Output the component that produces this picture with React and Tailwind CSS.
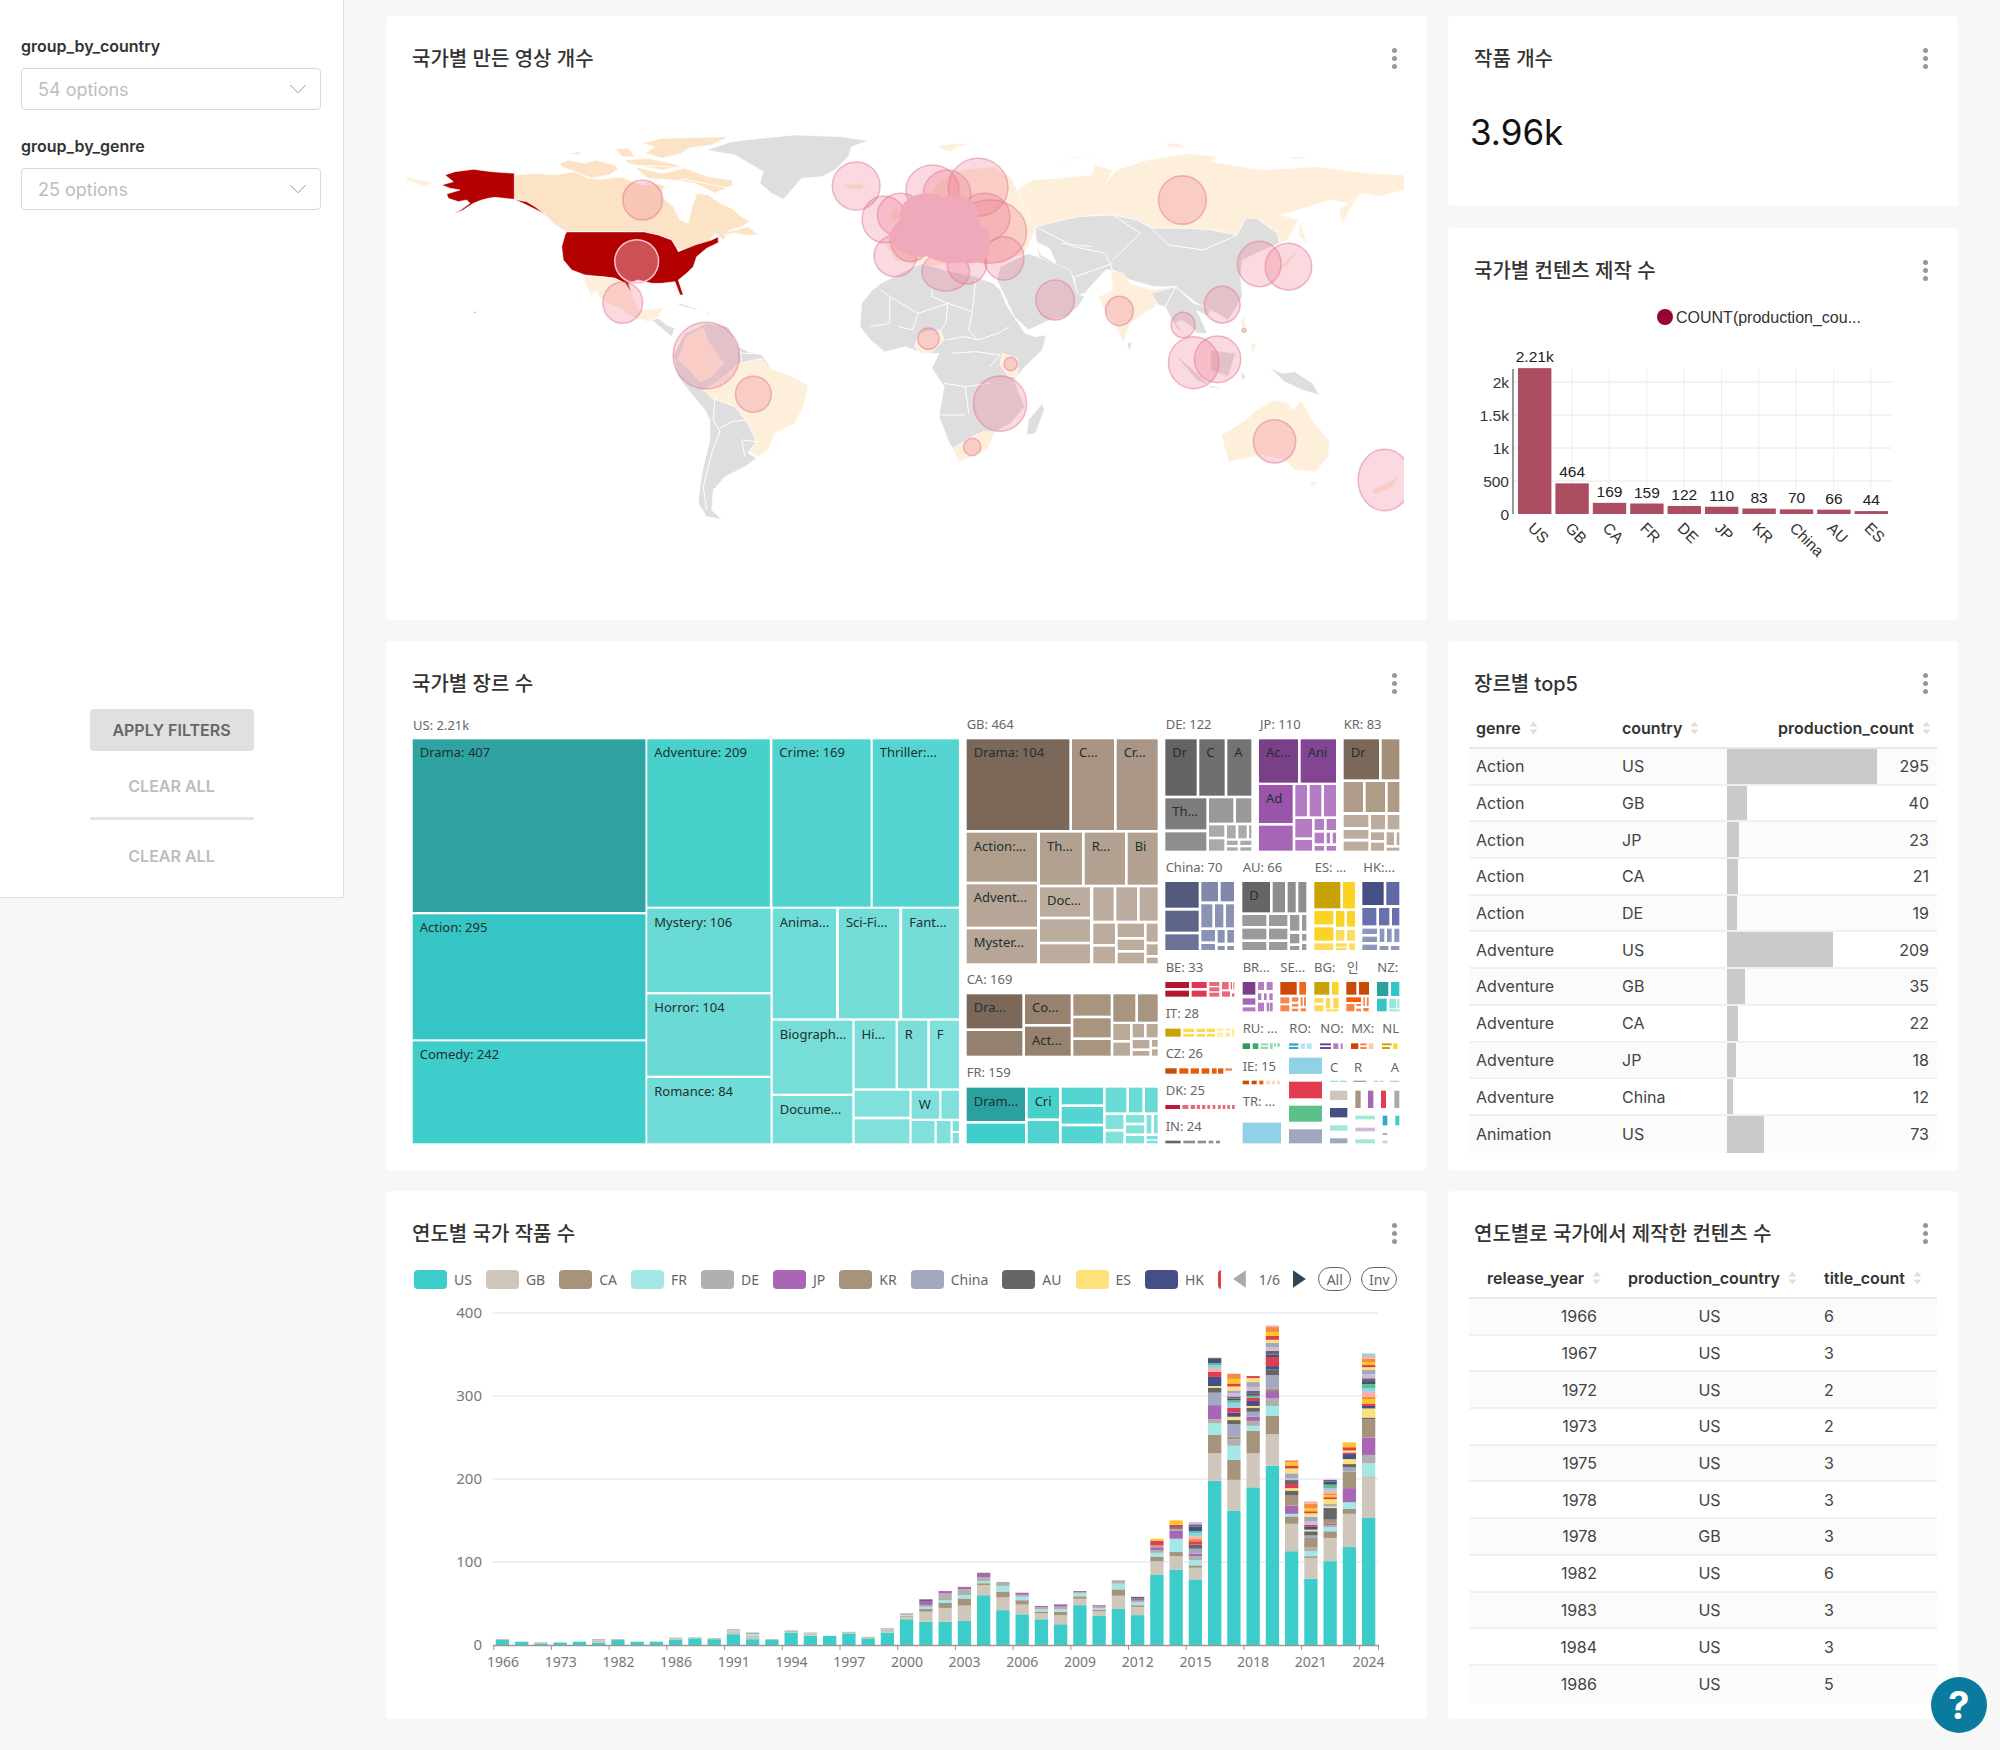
import { ChevronDown } from 'lucide-react'

const FONT = "font-['Inter','Noto_Sans_CJK_KR',sans-serif]"
const CHART_FONT = "font-['Noto_Sans','Noto_Sans_CJK_KR',sans-serif]"
const BAR_FONT = "font-['Liberation_Sans',sans-serif]"

const Kebab = () => (
  <div className="flex flex-col gap-[3px]">
    <span className="w-[5px] h-[5px] rounded-full bg-[#8e9aa0]"></span>
    <span className="w-[5px] h-[5px] rounded-full bg-[#8e9aa0]"></span>
    <span className="w-[5px] h-[5px] rounded-full bg-[#8e9aa0]"></span>
  </div>
)

const CardHeader = ({ title }) => (
  <div className="flex items-center justify-between pt-[29px] pl-[26px] pr-[30px] h-[55px]">
    <h2 className="text-[20px] leading-[26px] pt-[2px] font-medium text-[#333]">{title}</h2>
    <Kebab />
  </div>
)

const SortIcon = () => (
  <svg width="9" height="14" viewBox="0 0 9 14" className="inline-block ml-[8px] shrink-0">
    <path d="M4.5 0.5 L8.5 5.5 L0.5 5.5 Z" fill="#dfdfdf" />
    <path d="M4.5 13.5 L8.5 8.5 L0.5 8.5 Z" fill="#dfdfdf" />
  </svg>
)

// ---------- sidebar ----------
const FilterSelect = ({ label, value, className }) => (
  <div className={className}>
    <div className="text-[16px] leading-[20px] font-semibold text-[#333]">{label}</div>
    <div className="mt-[12px] h-[42px] w-[300px] border border-[#d9d9d9] rounded-[4px] flex items-center justify-between pl-[16px] pr-[7px]">
      <span className="text-[18px] text-[#bdbdbd]">{value}</span>
      <ChevronDown size={30} strokeWidth={0.8} className="text-[#999]" />
    </div>
  </div>
)

const Sidebar = () => (
  <aside className="w-[344px] h-[898px] bg-white border-r border-b border-[#e0e0e0] flex flex-col px-[21px] pt-[36px] shrink-0">
    <FilterSelect label="group_by_country" value="54 options" />
    <FilterSelect label="group_by_genre" value="25 options" className="mt-[26px]" />
    <div className="mt-auto mb-[23px] w-[164px] mx-auto flex flex-col items-center">
      <button className="w-full h-[42px] rounded-[4px] bg-[#e0e0e0] text-[16px] font-semibold text-[#666]">APPLY FILTERS</button>
      <div className="h-[36px] mt-[17px] flex items-center text-[16px] font-semibold text-[#bdbdbd]">CLEAR ALL</div>
      <div className="w-full h-[3px] mt-[13px] rounded-full bg-[#e4e4e4]"></div>
      <div className="h-[36px] mt-[18px] flex items-center text-[16px] font-semibold text-[#bdbdbd]">CLEAR ALL</div>
    </div>
  </aside>
)

// ---------- world map ----------
const GREY = '#dedede'
const PEACH = '#fce3c6'
const LIGHT = '#feefdb'
const RED = '#b30000'

// western half: x = 5 + zx / 3, y = 20 + zy / 3
const landWest = [
  [LIGHT, '35,170 75,180 110,185 95,200 60,190 35,180'],
  [PEACH, '740,70 800,55 1000,50 950,75 880,85 860,100 800,115 750,100 780,80'],
  [PEACH, '495,130 520,120 570,130 600,120 660,135 670,150 640,165 590,175 540,155 500,140'],
  [PEACH, '520,100 560,95 550,105'],
  [PEACH, '660,85 700,85 720,110 680,110'],
  [PEACH, '690,120 760,115 830,130 860,140 800,150 750,140 700,130'],
  [PEACH, '720,140 800,160 870,145 940,170 1010,180 1015,195 960,220 900,190 830,180 760,175 740,160'],
  [PEACH, '358,165 420,160 480,165 540,155 580,175 620,178 680,170 700,180 740,195 760,185 800,195 830,210 850,240 880,235 900,220 940,225 975,250 1010,265 1040,290 1065,305 1040,320 1005,330 985,360 960,340 940,365 900,380 860,390 845,385 830,360 790,345 745,335 515,335 480,315 455,290 420,265 395,245 358,238'],
  ['#ffffff', '805,205 850,200 905,225 890,265 880,310 855,300 835,260 800,230'],
  [PEACH, '985,345 1020,340 1050,345 1090,345 1060,320 1000,335'],
  [GREY, '935,90 1010,65 1100,55 1200,45 1340,50 1420,62 1370,80 1360,110 1320,150 1280,170 1220,175 1190,210 1165,238 1130,220 1095,190 1105,155 1080,140 1020,105'],
  [RED, '150,165 180,155 235,148 290,155 358,160 358,238 300,232 280,235 260,240 235,250 205,270 175,283 200,268 225,250 215,240 190,245 160,235 155,222 195,210 165,205 140,195 175,185'],
  [RED, '358,238 395,245 420,260 450,282 425,270 395,255'],
  [RED, '515,335 745,335 790,345 830,360 845,385 850,395 900,375 950,360 970,350 970,368 935,385 905,410 895,440 875,460 850,480 865,525 855,525 840,485 800,490 770,490 730,480 700,490 710,520 690,490 660,475 620,470 570,465 530,450 505,420 500,380 510,345'],
  [RED, '237,575 241,575 241,579 237,579'],
  [LIGHT, '565,470 620,470 660,475 690,490 710,520 730,570 790,565 805,565 790,590 760,605 720,595 680,570 620,540 600,510 590,530 570,490'],
  [GREY, '770,600 790,595 815,615 840,625 830,650 800,625'],
  [GREY, '855,550 900,565 910,572 850,555'],
  [GREY, '930,575 955,585 935,582'],
  [GREY, '870,640 935,610 1000,620 1030,680 1060,695 1100,705 1125,740 1030,770 960,830 1020,860 1060,910 1085,965 1060,1000 1085,1015 1050,1040 990,1070 955,1110 950,1170 980,1198 935,1190 910,1150 915,1100 925,1040 945,960 945,900 930,870 880,810 850,770 835,705'],
  [LIGHT, '875,650 925,625 935,660 985,730 950,770 915,785 885,750 850,720'],
  [LIGHT, '1030,730 1100,715 1125,745 1180,765 1240,795 1225,860 1200,910 1140,940 1120,990 1090,1010 1060,995 1085,965 1055,905 1020,860 950,835 925,810 960,790 1000,760'],
  [LIGHT, '1340,195 1400,190 1410,205 1370,208'],
]

const bordersWest = [
  '960,830 955,900 975,935 950,1000 925,1100 935,1170',
  '975,925 1010,905 1055,900',
  '1040,700 1100,700',
  '1035,690 1040,725',
  '1085,965 1040,960 1050,1010',
  '515,335 745,335',
  '740,195 870,178 1005,205',
  '660,152 720,136 860,142',
  '640,166 720,178',
  '820,118 900,130',
  '950,75 860,102',
]

// eastern half: x = 470 + zx / 2.851, y = 20 + zy / 3
const landEast = [
  [LIGHT, '220,78 260,72 330,70 280,80 260,95 240,90'],
  [LIGHT, '550,145 610,110 670,100 610,115 570,135'],
  [LIGHT, '870,70 910,70 930,85 880,80'],
  [LIGHT, '1225,110 1270,110 1265,116 1230,116'],
  [LIGHT, '420,170 450,210 490,180 560,175 660,165 670,135 720,150 700,190 730,150 820,120 940,100 1020,110 1000,125 1150,150 1300,140 1450,160 1555,165 1550,210 1480,230 1430,220 1400,260 1370,310 1390,250 1340,240 1250,270 1200,285 1250,300 1220,360 1195,370 1190,340 1130,295 1100,295 1075,345 1000,330 940,325 830,325 790,300 720,285 620,290 500,325 480,345 470,390 400,430'],
  [LIGHT, '100,420 70,370 140,340 110,290 170,270 220,190 290,150 380,140 430,170 500,330 470,400 400,430 300,420 200,440'],
  [LIGHT, '90,270 105,260 115,300 85,300'],
  [LIGHT, '1255,300 1265,340 1275,375 1250,345'],
  [LIGHT, '1250,390 1215,440 1190,450 1230,405'],
  [LIGHT, '1365,270 1425,220 1395,270 1375,310'],
  [GREY, '500,320 620,290 720,285 790,300 830,325 940,325 1000,330 1075,345 1100,295 1130,295 1190,340 1195,370 1130,400 1090,420 1085,470 1090,530 1050,600 1000,570 960,550 900,500 840,500 770,480 720,450 700,450 640,520 620,525 610,470 540,430 510,410 500,340'],
  ['#ffffff', '500,365 540,385 560,430 515,405'],
  [GREY, '400,440 480,400 600,450 620,520 640,530 620,560 590,590 540,600 480,630 440,590 400,500 390,480'],
  [LIGHT, '680,530 720,510 715,450 750,460 770,490 830,510 895,500 880,530 860,525 840,560 770,610 750,670 730,620 700,580'],
  [GREY, '765,665 775,670 770,690 762,680'],
  [GREY, '830,520 900,500 950,550 985,560 1000,570 990,590 960,570 990,640 960,640 945,620 915,600 900,610 930,650 900,620 870,560 850,555'],
  [LIGHT, '1085,600 1095,590 1100,620 1090,625'],
  [LIGHT, '1115,670 1130,670 1125,695 1115,690'],
  [GREY, '895,700 960,760 1000,800 960,780'],
  [GREY, '1000,690 1070,700 1050,770 1000,750'],
  [GREY, '990,795 1040,805 1000,803'],
  [GREY, '1085,750 1100,770 1090,780'],
  [GREY, '1170,745 1205,760 1240,755 1290,790 1310,825 1260,810 1210,785'],
  [GREY, '60,490 115,460 175,430 240,450 330,470 380,490 400,510 420,560 470,640 500,650 530,645 520,690 470,740 440,780 450,810 470,860 430,910 385,935 360,980 310,1010 280,1010 255,970 225,890 240,800 205,745 225,700 180,700 130,680 70,695 30,660 0,620 5,550 35,510'],
  [LIGHT, '265,985 295,965 320,950 350,935 385,935 365,985 310,1015 280,1025'],
  [LIGHT, '155,680 170,640 230,630 240,660 200,700 175,700'],
  [LIGHT, '405,700 450,715 450,770 425,770 400,735'],
  [GREY, '480,900 520,850 525,870 500,940 475,945'],
  [LIGHT, '1030,945 1100,900 1130,870 1180,840 1220,850 1235,870 1258,840 1290,900 1340,965 1335,1010 1300,1055 1240,1050 1210,1020 1150,1005 1050,1025'],
  [LIGHT, '1280,1085 1305,1085 1290,1100'],
  [LIGHT, '1460,1110 1520,1080 1540,1050 1520,1100 1470,1125'],
]

const bordersEast = [
  '60,510 85,530 165,580 250,550 320,575 330,480',
  '205,500 205,530 250,550',
  '85,530 85,610 30,620',
  '165,580 150,630 110,620',
  '250,550 245,610 230,630',
  '320,575 310,630 335,660 395,640 425,620',
  '245,660 300,650 335,660',
  '260,700 330,695 400,705',
  '240,790 300,800 310,880',
  '225,885 300,885',
  '370,740 400,705',
  '300,800 370,790',
  '500,320 610,380 700,400 720,450',
  '575,370 660,380',
  '615,470 720,430',
  '830,325 880,375 980,390 1075,345',
  '720,285 800,340 720,420',
  '870,560 900,500',
]

// bubbles: in a stretched space, x = zx * 0.6631, y = zy / 3
const bubbles = [
  [703, 258, 36, 72], [745, 358, 33, 70], [770, 345, 35, 65], [818, 270, 40, 75], [840, 285, 36, 75], [887, 262, 45, 87],
  [762, 468, 32, 62], [785, 420, 30, 65], [897, 352, 38, 72], [905, 395, 55, 95],
  [926, 475, 30, 65], [838, 515, 36, 58], [870, 490, 30, 62],
  [381, 300, 30, 60], [351, 608, 30, 62], [1195, 300, 36, 73], [1003, 600, 29, 60], [1100, 633, 21, 44],
  [1311, 492, 33, 68], [1355, 500, 35, 70], [1255, 614, 27, 55], [1196, 675, 18, 38], [1288, 691, 3, 6], [1212, 788, 38, 78], [1248, 778, 35, 70],
  [812, 716, 16, 32], [936, 792, 10, 20], [920, 911, 40, 83], [878, 1041, 13, 26],
  [477, 767, 50, 100], [548, 883, 27, 54], [1334, 1024, 32, 65], [1500, 1140, 40, 92],
]

// overlap of the many European bubbles reads as one solid pink patch
const clusterBlobs = [
  [810, 345, 42, 65], [850, 345, 38, 60], [800, 410, 46, 60], [850, 420, 55, 70], [830, 375, 60, 55], [875, 450, 30, 40],
]

const LandLayer = ({ polys, lines }) => (
  <>
    {polys.map(([fill, pts], i) => (
      <polygon key={i} points={pts} fill={fill} stroke="#fff" strokeWidth="0.6" vectorEffect="non-scaling-stroke" />
    ))}
    {lines.map((pts, i) => (
      <polyline key={i} points={pts} fill="none" stroke="#fff" strokeWidth="1" vectorEffect="non-scaling-stroke" />
    ))}
  </>
)

const WorldMap = () => (
  <svg width="1040" height="460" viewBox="0 0 1040 460" className="block ml-[4px] mt-[29px]">
    <defs>
      <clipPath id="map-clip"><rect x="0" y="0" width="1014" height="460" /></clipPath>
    </defs>
    <g clipPath="url(#map-clip)">
      <g transform="translate(470 20) scale(0.3508 0.3333)">
        <LandLayer polys={landEast} lines={bordersEast} />
      </g>
      <g transform="translate(5 20) scale(0.3333)">
        <LandLayer polys={landWest} lines={bordersWest} />
      </g>
      <g transform="scale(0.6631 0.3333)">
        {bubbles.map(([cx, cy, rx, ry], i) => (
          <ellipse key={i} cx={cx} cy={cy} rx={rx} ry={ry} fill="rgba(236,120,145,0.28)" stroke="rgba(226,120,145,0.5)" strokeWidth="1.5" vectorEffect="non-scaling-stroke" />
        ))}
        <ellipse cx="372" cy="484" rx="33" ry="65" fill="rgba(240,190,200,0.42)" stroke="#f2c2cb" strokeWidth="1.5" vectorEffect="non-scaling-stroke" />
        {clusterBlobs.map(([cx, cy, rx, ry], i) => (
          <ellipse key={i} cx={cx} cy={cy} rx={rx} ry={ry} fill="#f0a9bb" />
        ))}
      </g>
    </g>
  </svg>
)

// ---------- bar chart ----------
const barData = [
  ['US', 2210, '2.21k'], ['GB', 464, '464'], ['CA', 169, '169'], ['FR', 159, '159'], ['DE', 122, '122'],
  ['JP', 110, '110'], ['KR', 83, '83'], ['China', 70, '70'], ['AU', 66, '66'], ['ES', 44, '44'],
]

const BarChart = () => (
  <svg width="510" height="300" viewBox="1448 283 510 300" className={`block ${BAR_FONT}`}>
    <circle cx="1665" cy="317" r="8" fill="#96052e" />
    <text x="1676" y="323" className="text-[16px] fill-[#333]">COUNT(production_cou...</text>
    {[382, 415, 448, 481].map((y) => (
      <line key={y} x1="1513" x2="1892" y1={y} y2={y} stroke="#e8e8e8" />
    ))}
    {barData.map((_, i) => (
      <line key={i} x1={1534.5 + 37.4 * i} x2={1534.5 + 37.4 * i} y1="369" y2="514" stroke="#eeeeee" />
    ))}
    <line x1="1513" x2="1513" y1="369" y2="514" stroke="#333" />
    {[['2k', 388], ['1.5k', 421], ['1k', 454], ['500', 487], ['0', 520]].map(([t, y]) => (
      <text key={t} x="1509" y={y} textAnchor="end" className="text-[15.5px] fill-[#333]">{t}</text>
    ))}
    {barData.map(([name, value, label], i) => {
      const h = (value / 2000) * 132
      const x = 1518 + 37.4 * i
      return (
        <g key={name}>
          <rect x={x} y={514 - h} width="33.4" height={h} fill="#ad4d62" />
          <text x={x + 16.7} y={514 - h - 6} textAnchor="middle" className="text-[15.5px] fill-[#222]">{label}</text>
          <text x={1527 + 37.4 * i} y="529" transform={`rotate(45 ${1527 + 37.4 * i} 529)`} className="text-[15.5px] fill-[#333]">{name}</text>
        </g>
      )
    })}
  </svg>
)

// ---------- treemap ----------
// left block coordinates: x = 400 + zx / 2.75, y = 700 + zy / 3
const usCells = [
  ['#2fa3a1', '35,118,675,636', 'Drama: 407'],
  ['#35c5c4', '35,643,675,1018', 'Action: 295'],
  ['#3fcdcc', '35,1024,675,1330', 'Comedy: 242'],
  ['#48d0ca', '680,118,1017,620', 'Adventure: 209'],
  ['#50d3cf', '1024,118,1294,620', 'Crime: 169'],
  ['#54d5d1', '1300,118,1537,620', 'Thriller:...'],
  ['#69dad4', '680,626,1019,876', 'Mystery: 106'],
  ['#6bd9d4', '680,883,1019,1127', 'Horror: 104'],
  ['#70dcd7', '680,1134,1019,1330', 'Romance: 84'],
  ['#70dcd7', '1025,626,1199,955', 'Anima...'],
  ['#74dcd6', '1207,626,1373,955', 'Sci-Fi...'],
  ['#76dcd8', '1381,626,1537,955', 'Fant...'],
  ['#76ddd8', '1025,962,1244,1181', 'Biograph...'],
  ['#7bded9', '1250,962,1363,1165', 'Hi...'],
  ['#7dded9', '1369,962,1450,1165', 'R'],
  ['#80e0db', '1457,962,1537,1165', 'F'],
  ['#76ddd8', '1025,1188,1244,1330', 'Docume...'],
  ['#82e0dc', '1407,1172,1483,1256', 'W'],
  ['#82e0dc', '1250,1172,1401,1250 1489,1172,1537,1256 1250,1258,1401,1330 1407,1263,1470,1330 1476,1263,1514,1330 1520,1263,1537,1293 1520,1299,1537,1330'],
]

// right block coordinates: x = 950 + zx / 3, y = 700 + zy / 3
const restCells = [
  // GB
  ['#7c6859', '50,118,358,390', 'Drama: 104'],
  ['#a99383', '366,118,492,390', 'C...'],
  ['#aa9686', '500,118,623,390', 'Cr...'],
  ['#b09e8d', '50,398,261,545', 'Action:...'],
  ['#b2a090', '270,398,396,554', 'Th...'],
  ['#b2a090', '404,398,525,554', 'R...'],
  ['#b2a090', '533,398,623,554', 'Bi'],
  ['#b7a697', '50,553,261,680', 'Advent...'],
  ['#b7a697', '50,688,261,790', 'Myster...'],
  ['#bcac9e', '270,562,420,650', 'Doc...'],
  ['#bcac9e', '430,562,491,662 499,562,561,662 569,562,623,662 270,658,420,725 430,671,495,732 503,671,582,711 590,671,623,725 270,733,420,790 430,740,495,790 503,719,582,750 503,758,582,790 590,733,623,765 590,773,623,790'],
  // CA
  ['#7c6859', '50,883,217,985', 'Dra...'],
  ['#94806f', '50,993,217,1067'],
  ['#96826f', '225,883,362,972', 'Co...'],
  ['#96826f', '225,980,362,1067', 'Act...'],
  ['#a8957f', '370,883,482,947 370,955,482,1012 370,1020,482,1067 490,883,556,965 564,883,623,965'],
  ['#b9a998', '490,972,540,1020 548,972,582,1012 590,972,623,1012 490,1028,540,1067 548,1020,598,1045 606,1020,623,1040 548,1053,598,1067 606,1048,623,1067'],
  // FR
  ['#2aa19f', '50,1163,225,1263', 'Dram...'],
  ['#3fcdcc', '50,1271,225,1330'],
  ['#48d0ca', '233,1163,327,1255', 'Cri'],
  ['#50d3cf', '233,1263,327,1330'],
  ['#54d5d1', '335,1163,459,1213 335,1221,459,1271 335,1279,459,1330'],
  ['#69dad4', '467,1163,529,1237 537,1163,577,1237 585,1163,623,1237'],
  ['#80e0db', '467,1245,520,1287 467,1295,520,1330 528,1245,582,1268 528,1276,582,1300 528,1308,582,1330 590,1245,604,1300 612,1245,623,1300 590,1308,623,1318 590,1322,623,1330'],
  // DE
  ['#636363', '646,118,740,287', 'Dr'],
  ['#6e6e6e', '748,118,824,287', 'C'],
  ['#737373', '832,118,904,287', 'A'],
  ['#7c7c7c', '646,295,769,388', 'Th...'],
  ['#999999', '777,295,850,368 858,295,904,368'],
  ['#8e8e8e', '646,397,769,452'],
  ['#aaaaaa', '777,376,823,410 831,376,857,415 865,376,890,415 897,376,904,415 777,418,823,452 831,422,863,435 871,422,904,435 831,442,863,452 871,442,904,452'],
  // JP
  ['#7a4087', '927,118,1044,248', 'Ac...'],
  ['#834593', '1052,118,1158,248', 'Ani'],
  ['#9a55aa', '927,255,1028,369', 'Ad'],
  ['#a666b5', '927,377,1028,452'],
  ['#b47cc2', '1036,255,1071,349 1079,255,1114,349 1122,255,1158,349 1036,357,1086,412 1094,357,1122,390 1130,357,1158,390 1094,398,1122,430 1130,398,1140,430 1148,398,1158,430 1036,420,1086,452 1094,438,1122,452 1130,438,1158,452'],
  // KR
  ['#7c6859', '1181,118,1287,238', 'Dr'],
  ['#a49079', '1295,118,1348,238'],
  ['#ae9b88', '1181,246,1239,336 1247,246,1305,336 1313,246,1348,336'],
  ['#bcac9e', '1181,345,1255,381 1263,345,1305,388 1313,345,1348,388 1181,390,1255,416 1263,397,1302,420 1310,397,1332,435 1340,397,1348,435 1181,425,1255,452 1263,428,1302,452 1310,443,1348,452'],
  // China
  ['#53597a', '646,546,746,623'],
  ['#5e6588', '646,632,746,695'],
  ['#6b7297', '646,703,746,750'],
  ['#8088ac', '754,546,804,604 812,546,852,604'],
  ['#8b93b5', '754,613,787,682 795,613,820,682 828,613,852,682 754,690,795,724 803,690,824,728 832,690,852,728 754,732,795,750 803,738,824,750 832,738,852,750'],
  // AU
  ['#666666', '877,546,960,637', 'D'],
  ['#8e8e8e', '968,546,1005,637 1013,546,1037,637 1045,546,1069,637'],
  ['#9a9a9a', '877,645,949,678 957,645,1012,678 1020,645,1048,692 1056,645,1069,692 877,686,949,718 957,686,1012,718 877,726,949,750 957,726,1012,750 1020,702,1048,730 1056,702,1069,722 1020,738,1048,750 1056,732,1069,750'],
  // ES
  ['#c9a205', '1093,546,1171,625'],
  ['#fbd323', '1179,546,1215,625 1093,633,1150,673 1158,633,1183,680 1191,633,1215,680 1093,682,1150,722'],
  ['#fcdc5c', '1158,690,1183,722 1191,690,1215,722 1093,730,1150,750 1158,730,1190,740 1158,743,1190,750 1198,730,1215,750'],
  // HK
  ['#454e85', '1237,546,1301,615'],
  ['#6069a3', '1309,546,1348,615'],
  ['#6871ad', '1237,624,1279,676 1287,624,1318,676 1326,624,1348,676'],
  ['#8e96bc', '1237,686,1281,702 1237,710,1281,726 1237,734,1281,750 1289,686,1303,726 1311,686,1325,726 1333,686,1348,726 1289,738,1315,750 1323,738,1348,750'],
  // BE
  ['#b3162f', '646,846,717,864 646,872,717,890'],
  ['#e03850', '725,846,770,864 725,872,770,890'],
  ['#e86a7c', '778,846,808,858 778,862,808,874 778,878,808,890 816,846,836,868 842,846,846,868 850,846,853,868 816,874,840,890 846,880,853,890'],
  // IT
  ['#c9a205', '646,986,692,1010'],
  ['#fbd950', '700,986,732,996 700,1002,732,1010 740,986,765,996 740,1002,765,1010 770,986,795,996 770,1002,795,1010'],
  ['#fde99a', '800,986,820,992 800,998,820,1004 800,1006,820,1010 826,986,840,992 826,998,840,1010 846,986,853,1010'],
  // CZ
  ['#c84a05', '646,1105,680,1121'],
  ['#e85a0a', '688,1105,715,1121 722,1105,747,1121 755,1105,778,1121 786,1105,800,1121 804,1105,820,1121'],
  ['#f58548', '826,1105,846,1112'],
  // DK
  ['#bb1d36', '646,1215,690,1227'],
  ['#e86a7c', '697,1215,715,1227 722,1215,735,1227 740,1215,750,1227 756,1215,766,1227 772,1215,780,1227 788,1215,796,1227 804,1215,812,1227 818,1215,826,1227 832,1215,840,1227 846,1215,854,1227'],
  // IN
  ['#666666', '646,1322,692,1330'],
  ['#8e8e8e', '700,1322,735,1330 743,1322,768,1330 776,1322,790,1330 798,1322,810,1330'],
  // BR
  ['#7a4087', '878,846,916,884'],
  ['#a666b5', '878,895,916,914'],
  ['#b47cc2', '924,846,942,870 950,846,968,870 878,922,916,934 924,880,934,900 942,880,950,900 958,880,968,900 924,908,942,934 950,908,958,934 960,908,968,934'],
  // SE
  ['#cc4a05', '991,846,1040,884'],
  ['#ec6a1a', '1048,846,1068,884'],
  ['#f58548', '991,892,1018,910 1026,892,1045,905 1052,892,1058,918 1062,892,1068,918 991,916,1018,934 1026,912,1045,920 1026,926,1045,934 1052,925,1068,934'],
  // BG
  ['#c9a205', '1093,846,1138,884'],
  ['#fbd323', '1146,846,1166,884'],
  ['#fcd950', '1093,894,1120,908 1093,916,1120,934 1128,894,1140,925 1150,894,1166,925 1128,928,1166,934'],
  // IND
  ['#c84a05', '1189,846,1219,884 1227,846,1257,884'],
  ['#f85a0a', '1189,892,1233,906'],
  ['#f58548', '1189,912,1213,934 1219,912,1233,918 1219,926,1233,934 1240,892,1245,918 1250,892,1256,918 1240,924,1256,934'],
  // NZ
  ['#2aa19f', '1281,846,1315,888'],
  ['#35c5c4', '1323,846,1348,888 1281,896,1310,934'],
  ['#99e6e0', '1318,896,1338,925 1342,896,1348,925 1318,928,1348,934'],
  // small countries
  ['#2f9a5e', '878,1030,900,1047'],
  ['#3aa96b', '908,1030,925,1047'],
  ['#8fdcb5', '932,1030,955,1036 932,1040,955,1047 960,1030,968,1047 972,1030,978,1040 982,1030,990,1040'],
  ['#2fa8c9', '1017,1030,1045,1037 1017,1041,1045,1047'],
  ['#b8e6f0', '1052,1030,1065,1047 1070,1030,1085,1047'],
  ['#6a4b92', '1110,1030,1143,1036 1110,1041,1143,1047'],
  ['#b47cc2', '1150,1030,1165,1047 1172,1030,1178,1047'],
  ['#c84a05', '1203,1030,1225,1047'],
  ['#f58548', '1231,1030,1250,1036 1231,1041,1250,1047'],
  ['#fbc9ac', '1256,1030,1270,1047'],
  ['#c9a205', '1296,1030,1325,1036 1296,1041,1320,1047'],
  ['#fbd323', '1330,1030,1342,1047'],
  ['#c84a05', '878,1142,897,1153 905,1142,920,1153'],
  ['#e85a0a', '928,1142,940,1153'],
  ['#fbd9c4', '948,1142,960,1153 965,1142,975,1153 980,1142,990,1153'],
  ['#8fd1e6', '1017,1073,1116,1122 878,1268,993,1330'],
  ['#e03c52', '1017,1145,1116,1195 1293,1172,1308,1224'],
  ['#5cc08a', '1017,1217,1116,1265'],
  ['#a0a8c0', '1017,1288,1116,1330 1140,1315,1192,1330'],
  ['#a8d8d6', '1140,1142,1165,1146 1170,1142,1190,1146 1272,1142,1285,1146 1290,1142,1300,1146 1320,1142,1348,1146'],
  ['#9aa0a8', '1210,1142,1248,1146'],
  ['#cfc7bc', '1140,1172,1192,1200'],
  ['#454e85', '1140,1224,1192,1252'],
  ['#a0e8d8', '1140,1276,1192,1292 1216,1247,1275,1258 1216,1318,1275,1330'],
  ['#a8957f', '1216,1172,1232,1224'],
  ['#a666b5', '1254,1172,1270,1224'],
  ['#aaaaaa', '1333,1172,1348,1224'],
  ['#d3b7e0', '1216,1283,1275,1294'],
  ['#30a8d0', '1298,1247,1312,1276'],
  ['#40cdcc', '1336,1247,1348,1276'],
  ['#888888', '1298,1300,1312,1304'],
  ['#f0c0c8', '1298,1322,1312,1330'],
]

const groupLabels = [
  ['GB: 464', 50, 88], ['DE: 122', 647, 88], ['JP: 110', 930, 88], ['KR: 83', 1181, 88],
  ['China: 70', 647, 515], ['AU: 66', 878, 515], ['ES: ...', 1094, 515], ['HK:...', 1240, 515],
  ['BE: 33', 647, 815], ['BR...', 878, 815], ['SE...', 991, 815], ['BG:', 1092, 815], ['인', 1190, 815], ['NZ:', 1282, 815],
  ['IT: 28', 647, 955], ['RU: ...', 878, 998], ['RO:', 1018, 998], ['NO:', 1111, 998], ['MX:', 1204, 998], ['NL', 1297, 998],
  ['CZ: 26', 647, 1075], ['IE: 15', 878, 1112], ['C', 1140, 1115], ['R', 1212, 1115], ['A', 1322, 1115],
  ['DK: 25', 647, 1184], ['TR: ...', 878, 1217], ['IN: 24', 647, 1292], ['CA: 169', 50, 853], ['FR: 159', 50, 1131],
]

const parseCells = (rows, sx, ox) =>
  rows.flatMap(([fill, boxes, label]) =>
    boxes.split(' ').map((box) => {
      const [x0, y0, x1, y1] = box.split(',').map(Number)
      return { fill, label, x: ox + x0 / sx, y: 700 + y0 / 3, w: (x1 - x0) / sx, h: (y1 - y0) / 3 }
    })
  )

const allCells = [...parseCells(usCells, 2.75, 400), ...parseCells(restCells, 3, 950)]

const Treemap = () => (
  <svg width="1020" height="470" viewBox="400 700 1020 470" className={`block ml-[14px] mt-[4px] ${CHART_FONT}`}>
    <text x="413" y="730" className="text-[13px] fill-[#666]">US: 2.21k</text>
    {groupLabels.map(([t, x, y]) => (
      <text key={t + x + y} x={950 + x / 3} y={700 + y / 3} className="text-[13px] fill-[#666]">{t}</text>
    ))}
    {allCells.map((c, i) => (
      <g key={i}>
        <rect x={c.x} y={c.y} width={c.w} height={c.h} fill={c.fill} />
        {c.label && <text x={c.x + 7} y={c.y + 18} className="text-[13px] fill-[#20302f]">{c.label}</text>}
      </g>
    ))}
  </svg>
)

// ---------- stacked chart ----------
const PALETTE = ['#3ccdca', '#cfc7bc', '#a6937c', '#a3e8e4', '#b0b0b0', '#a866b5', '#a6937c', '#a1a8c0', '#666666', '#fde17a', '#454e85', '#e03c52', '#fcc917', '#f58a47', '#f9b0a8', '#8fd1e6', '#5cc08a', '#d3b7e0']
const LEFTOVER = [9, 11, 12, 13, 14, 15, 16, 10, 8, 17, 7]

const totals = [
  [7, 6], [4, 4], [3, 2], [3, 3], [4, 4], [7, 3], [7, 6], [4, 4], [4, 4], [9, 6], [9, 8], [8, 7], [19, 13], [15, 7], [7, 6], [18, 15],
  [15, 11], [11, 11], [16, 14], [10, 8], [20, 15], [38, 31], [55, 28], [65, 28], [70, 29], [87, 60], [76, 42], [63, 37], [47, 31], [49, 25],
  [65, 48], [48, 35], [78, 44], [58, 36], [128, 85], [150, 91], [148, 79], [346, 198], [327, 162], [324, 190], [385, 216], [223, 113],
  [173, 80], [199, 101], [244, 118], [351, 153],
]

// first segments of the taller bars, in palette order after US
const heads = {
  34: [16, 5, 5, 3, 3, 1, 2],
  35: [16, 5, 16, 0, 10, 0, 2, 2, 0, 0, 3],
  36: [14, 3, 6, 5, 3, 0, 6, 5, 0, 0, 4],
  37: [33, 22, 14, 5, 17, 0, 15, 6, 2, 11, 6],
  38: [37, 24, 17, 8, 0, 3, 15, 5, 4, 5, 6],
  39: [41, 27, 6, 6, 5, 0, 6, 5, 2, 6, 4],
  40: [38, 22, 12, 9, 9, 3, 16, 7, 0, 4, 11],
  41: [33, 9, 3, 0, 10, 12, 0, 6, 3, 0, 5],
  42: [25, 2, 6, 5, 0, 11, 3, 5, 2, 4, 2],
  43: [28, 8, 5, 2, 2, 5, 0, 14, 2, 0, 0],
  44: [40, 6, 8, 0, 17, 20, 5, 4, 6, 6, 2],
  45: [49, 1, 16, 10, 21, 22, 0, 2, 11, 3, 0],
}

const noise = (i, k) => {
  const v = Math.sin(i * 12.9 + k * 78.2) * 43758.5
  return v - Math.floor(v)
}

const makeSegments = (i) => {
  const [total, us] = totals[i]
  const segs = [[us, 0]]
  let used = us
  const head = heads[i]
  if (head) {
    head.forEach((v, k) => {
      segs.push([v, k + 1])
      used += v
    })
    let k = 0
    while (used < total) {
      const v = Math.min(2 + noise(i, k) * 4, total - used)
      segs.push([v, LEFTOVER[(k + i) % LEFTOVER.length]])
      used += v
      k++
    }
  } else {
    const rest = total - us
    const cols = [1, 2, 3, 4, 5, 8, 12]
    let k = 0
    while (used < total - 0.01) {
      const share = k === 0 ? rest * 0.45 : Math.max(rest * 0.08 + noise(i, k) * rest * 0.15, 0.6)
      const v = Math.min(share, total - used)
      segs.push([v, cols[k % cols.length]])
      used += v
      k++
    }
  }
  return segs
}

const legend = [
  ['US', '#3ccdca'], ['GB', '#cfc7bc'], ['CA', '#a6937c'], ['FR', '#a3e8e4'], ['DE', '#b0b0b0'], ['JP', '#a866b5'],
  ['KR', '#a6937c'], ['China', '#a1a8c0'], ['AU', '#666666'], ['ES', '#fde17a'], ['HK', '#454e85'], ['', '#e03c52'],
]

const YEARS = [1966, 1973, 1982, 1986, 1991, 1994, 1997, 2000, 2003, 2006, 2009, 2012, 2015, 2018, 2021, 2024]

const StackedChart = () => (
  <svg width="1030" height="400" viewBox="390 1300 1030 400" className={`block ml-[4px] mt-[8px] ${CHART_FONT}`}>
    {[[0, 1646], [100, 1563], [200, 1480], [300, 1397], [400, 1314]].map(([t, y]) => (
      <g key={t}>
        {t > 0 && <line x1="493" x2="1378" y1={y} y2={y} stroke="#e9ebf3" strokeWidth="1.5" />}
        <text x="482" y={y + 5} textAnchor="end" className="text-[15px] fill-[#777]">{t}</text>
      </g>
    ))}
    {totals.map((_, i) => {
      let y = 1646
      return (
        <g key={i}>
          {makeSegments(i).map(([v, c], k) => {
            const h = v * 0.83
            y -= h
            return <rect key={k} x={502.4 + 19.25 * i - 6.65} y={y} width="13.3" height={h} fill={PALETTE[c]} />
          })}
        </g>
      )
    })}
    <line x1="493" x2="1379" y1="1646.5" y2="1646.5" stroke="#999" strokeWidth="1.5" />
    {YEARS.map((year, i) => (
      <g key={year}>
        <line x1={493.8 + 57.7 * i} x2={493.8 + 57.7 * i} y1="1646" y2="1651" stroke="#999" />
        <text x={503 + 57.7 * i} y="1668" textAnchor="middle" className="text-[14px] fill-[#777]">{year}</text>
      </g>
    ))}
    <line x1="1378.5" x2="1378.5" y1="1646" y2="1651" stroke="#999" />
  </svg>
)

const Legend = () => (
  <div className={`flex items-center h-[24px] mt-[21px] pl-[28px] pr-[30px] ${CHART_FONT}`}>
    <div className="w-[807px] overflow-hidden flex items-center gap-[14px] shrink-0">
      {legend.map(([name, color]) => (
        <div key={color + name} className="flex items-center gap-[7px] shrink-0">
          <span className="w-[33px] h-[19px] rounded-[4px]" style={{ backgroundColor: color }}></span>
          {name && <span className="text-[14px] text-[#666]">{name}</span>}
        </div>
      ))}
    </div>
    <svg width="13" height="18" viewBox="0 0 13 18" className="ml-[12px]"><path d="M13 0 V18 L0 9 Z" fill="#aaaaaa" /></svg>
    <span className="w-[48px] text-center text-[14px] text-[#666]">1/6</span>
    <svg width="13" height="18" viewBox="0 0 13 18"><path d="M0 0 V18 L13 9 Z" fill="#2f4554" /></svg>
    <span className="ml-[12px] w-[34px] h-[24px] rounded-full border border-[#666] flex items-center justify-center text-[14px] text-[#666]">All</span>
    <span className="ml-[10px] w-[36px] h-[24px] rounded-full border border-[#666] flex items-center justify-center text-[14px] text-[#666]">Inv</span>
  </div>
)

// ---------- tables ----------
const genreRows = [
  ['Action', 'US', 295], ['Action', 'GB', 40], ['Action', 'JP', 23], ['Action', 'CA', 21], ['Action', 'DE', 19],
  ['Adventure', 'US', 209], ['Adventure', 'GB', 35], ['Adventure', 'CA', 22], ['Adventure', 'JP', 18], ['Adventure', 'China', 12], ['Animation', 'US', 73],
]

const GenreTable = () => (
  <div className="mt-[11px] mx-[21px] text-[16px] text-[#444]">
    <div className="grid grid-cols-[146px_112px_209px] h-[42px] pt-[2px] items-center border-b-2 border-[#e8e8e8] font-semibold text-[#333]">
      <div className="pl-[7px] flex items-center">genre<SortIcon /></div>
      <div className="pl-[7px] flex items-center">country<SortIcon /></div>
      <div className="pr-[5px] flex items-center justify-end">production_count<SortIcon /></div>
    </div>
    {genreRows.map(([genre, country, count], i) => (
      <div key={i} className={`grid grid-cols-[146px_112px_209px] h-[36.7px] items-center border-b-2 border-[#f0f0f0] last:border-b-0 ${i % 2 === 0 ? 'bg-[#fbfbfb]' : 'bg-white'}`}>
        <div className="pl-[7px]">{genre}</div>
        <div className="pl-[7px]">{country}</div>
        <div className="relative h-full flex items-center justify-end pr-[7px]">
          <div className="absolute left-0 top-0 bottom-0 bg-[#cacaca]" style={{ width: (count / 295) * 150 }}></div>
          <span className="relative">{count}</span>
        </div>
      </div>
    ))}
  </div>
)

const yearRows = [
  [1966, 'US', 6], [1967, 'US', 3], [1972, 'US', 2], [1973, 'US', 2], [1975, 'US', 3], [1978, 'US', 3],
  [1978, 'GB', 3], [1982, 'US', 6], [1983, 'US', 3], [1984, 'US', 3], [1986, 'US', 5],
]

const YearTable = () => (
  <div className="mt-[13px] mx-[21px] text-[16px] text-[#444]">
    <div className="grid grid-cols-[140px_201px_126px] h-[40px] items-center border-b-2 border-[#e8e8e8] font-semibold text-[#333]">
      <div className="pl-[18px] flex items-center">release_year<SortIcon /></div>
      <div className="pl-[19px] flex items-center">production_country<SortIcon /></div>
      <div className="pl-[14px] flex items-center">title_count<SortIcon /></div>
    </div>
    {yearRows.map(([year, country, count], i) => (
      <div key={i} className={`grid grid-cols-[140px_201px_126px] h-[36.7px] items-center border-b-2 border-[#f0f0f0] last:border-b-0 ${i % 2 === 0 ? 'bg-[#fbfbfb]' : 'bg-white'}`}>
        <div className="text-right pr-[12px]">{year}</div>
        <div className="text-center">{country}</div>
        <div className="pl-[14px]">{count}</div>
      </div>
    ))}
  </div>
)

export default function App() {
  return (
    <div className={`relative w-[2000px] h-[1750px] bg-[#f7f7f7] flex overflow-hidden ${FONT}`}>
      <Sidebar />
      <main className="pl-[42px] pt-[16px] flex flex-col gap-[21px]">
        <div className="flex gap-[21px]">
          <section className="w-[1041px] h-[604px] bg-white rounded-[4px]">
            <CardHeader title="국가별 만든 영상 개수" />
            <WorldMap />
          </section>
          <div className="w-[510px] flex flex-col gap-[22px]">
            <section className="h-[190px] bg-white rounded-[4px]">
              <CardHeader title="작품 개수" />
              <div className="pl-[22px] mt-[36px] text-[35px] leading-[50px] text-[#111]">3.96k</div>
            </section>
            <section className="h-[392px] bg-white rounded-[4px]">
              <CardHeader title="국가별 컨텐츠 제작 수" />
              <BarChart />
            </section>
          </div>
        </div>
        <div className="flex gap-[21px]">
          <section className="w-[1041px] h-[529px] bg-white rounded-[4px]">
            <CardHeader title="국가별 장르 수" />
            <Treemap />
          </section>
          <section className="w-[510px] h-[529px] bg-white rounded-[4px]">
            <CardHeader title="장르별 top5" />
            <GenreTable />
          </section>
        </div>
        <div className="flex gap-[21px]">
          <section className="w-[1041px] h-[528px] bg-white rounded-[4px]">
            <CardHeader title="연도별 국가 작품 수" />
            <Legend />
            <StackedChart />
          </section>
          <section className="w-[510px] h-[528px] bg-white rounded-[4px]">
            <CardHeader title="연도별로 국가에서 제작한 컨텐츠 수" />
            <YearTable />
          </section>
        </div>
      </main>
      <div className="absolute right-[13px] bottom-[17px] w-[56px] h-[56px] rounded-full bg-[#0a7a9e] flex items-center justify-center text-white text-[38px] font-bold leading-none">?</div>
    </div>
  )
}
